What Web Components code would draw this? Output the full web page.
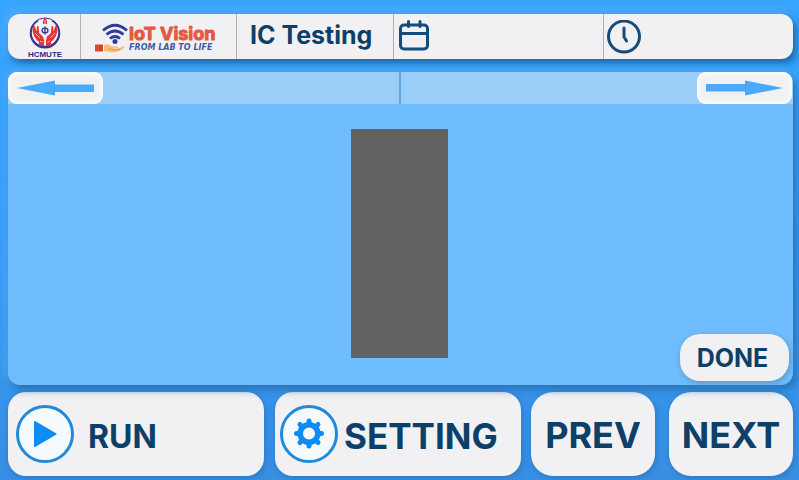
<!DOCTYPE html>
<html lang="en">
<head>
<meta charset="utf-8">
<meta name="viewport" content="width=device-width, initial-scale=1">
<title>IC Testing</title>
<style>
  body { margin: 0; font-family: Inter, "Liberation Sans", sans-serif; color: #0d4069; background: #36a1fe; }
</style>
</head>
<body>
<ic-app></ic-app>
<script>
const define = (name, html, setup) => {
  const template = document.createElement('template');
  template.innerHTML = html;
  customElements.define(name, class extends HTMLElement {
    constructor() {
      super();
      this.attachShadow({ mode: 'open' }).append(template.content.cloneNode(true));
    }
    connectedCallback() {
      if (setup) setup(this);
    }
  });
};

define('hcmute-logo', `
<style>
  :host { display: flex; flex-direction: column; align-items: center; color: #2b2c83; }
  svg { width: 34px; height: 34px; display: block; }
  span { font: bold 8px/9px "Liberation Sans", sans-serif; }
</style>
<svg viewBox="0 0 34 34" aria-hidden="true">
  <path d="M10 4.500A14.500 14.500 0 1 0 24 4.500A14 14 0 1 1 10 4.500Z" fill="#34358c" stroke="#34358c" stroke-width="1.500"/>
  <circle cx="17" cy="16.500" r="14.500" fill="none" stroke="#34358c" stroke-width="1"/>
  <path d="M17 1.500c-2 3-2.500 4-1.800 6.500h3.600c.7-2.500.2-3.500-1.800-6.500Z" fill="#e32b2d"/>
  <path d="M17 4v4" stroke="#fff" stroke-width=".8"/>
  <path d="M5 10l1.500-.5 2 6 .5-5.500 1.500.3.700 7 3.800 3.200 1 3.500V30H11v-4C7 23 5 19 4.500 14Z M29 10l-1.500-.5-2 6-.5-5.500-1.500.3-.7 7-3.800 3.200-1 3.500V30h5v-4c4-3 6-7 6.500-12Z" fill="#e3343a"/>
  <path d="M7 17l5 5M27 17l-5 5M12 25l2.500 1M22 25l-2.500 1" stroke="#fbd5d5" stroke-width=".8"/>
  <circle cx="17" cy="14.500" r="4.500" fill="#e5e8f7"/>
  <ellipse cx="17" cy="14.500" rx="3" ry="2.300" fill="none" stroke="#34358c" stroke-width="1.200"/>
  <path d="M17 10.500v8" stroke="#34358c" stroke-width="1.300"/>
</svg>
<span><slot></slot></span>`);

define('iot-logo', `
<style>
  :host { display: flex; align-items: center; }
  svg { width: 34px; height: 34px; flex: none; }
  .words { display: flex; flex-direction: column; padding-top: 2px; }
  .name { font: 700 18px/20px Inter, sans-serif; color: #e15a40; -webkit-text-stroke: 1px #e15a40; white-space: nowrap; }
  .tag { font: italic bold 8px/8px "DejaVu Sans", sans-serif; color: #4a57a3; white-space: nowrap; }
</style>
<svg viewBox="0 0 34 34" aria-hidden="true">
  <g fill="none" stroke="#2e3c98" stroke-width="2.800">
    <path d="M8 10.500Q20 0 32 10.500"/><path d="M11.500 14.500Q20 7.500 28.500 14.500"/><path d="M15 18.500Q20 14.500 25 18.500"/>
  </g>
  <circle cx="20" cy="21.500" r="2.500" fill="#2e3c98"/>
  <path d="M9 25c4-1 6 0 8 1.500h5c2 .2 1.500 2-.5 2h-4c4 1 7 0 10-2 2-.8 3 .5 1 2-5 3.500-10 4.500-14 3.500L9 31Z" fill="#f6bd78"/>
  <path d="M13 28.500c5 2 9 1.500 12 .5" fill="none" stroke="#df9651"/>
  <path d="M0 24.500h8v7H0Z" fill="#e0492f"/><path d="M5.500 25v6" stroke="#963d3d" stroke-width=".7"/>
</svg>
<span class="words"><span class="name"><slot></slot></span><span class="tag"><slot name="tag"></slot></span></span>`);

define('status-bar', `
<style>
  :host { display: block; }
  header { display: grid; grid-template-columns: 73fr 156fr 157fr 210fr 189fr; min-height: 45px; border-radius: 12px;
    background: #f1f1f3; box-shadow: 3px 4px 9px #17609f, -2px -2px 8px #5fb4ff; }
  header > div { display: flex; align-items: center; min-width: 0; border-right: 1px solid #aeb0b3; }
  header > div:last-child { border: 0; }
  .crest { justify-content: center; padding: 2px 0 0 2px; }
  .brand { padding-left: 14px; }
  .title { padding: 0 0 3px 13px; }
  h1 { font: 700 25px/30px Inter, sans-serif; margin: 0; white-space: nowrap; }
  .icon { padding-left: 3px; }
  svg { width: 34px; height: 34px; fill: none; stroke: #174b78; stroke-width: 3; stroke-linecap: round; stroke-linejoin: round; }
</style>
<header>
  <div class="crest"><hcmute-logo>HCMUTE</hcmute-logo></div>
  <div class="brand"><iot-logo>IoT Vision<span slot="tag">FROM LAB TO LIFE</span></iot-logo></div>
  <div class="title"><h1>IC Testing</h1></div>
  <div class="icon"><svg viewBox="0 0 34 34" role="img" aria-label="Date"><rect x="3.500" y="5" width="27" height="24" rx="3.500"/><path d="M3.500 13.500h27M11.500 1.500v5M23 1.500v5"/></svg></div>
  <div class="icon"><svg viewBox="0 0 34 34" role="img" aria-label="Time"><circle cx="17" cy="16.500" r="15.500"/><path d="M17 8v8.500q0 1 1 2l1.500 2.500"/></svg></div>
</header>`);

define('arrow-button', `
<style>
  :host { display: flex; width: 95px; }
  button { display: flex; align-items: center; justify-content: center; width: 100%; height: 32px; padding: 0; border: 0;
    border-radius: 9px; background: #f1f1f3; box-shadow: inset 0 0 4px 2px #fbfdff; }
  svg { width: 77px; height: 16px; fill: #49a9fa; }
  :host([next]) svg { transform: rotate(180deg); }
</style>
<button type="button"><svg viewBox="0 0 77 16" aria-hidden="true"><path d="M0 8L38 .5V4.500H77V12H38v3.500Z"/></svg></button>`,
  el => el.shadowRoot.querySelector('button').setAttribute('aria-label', el.hasAttribute('next') ? 'Forward' : 'Back'));

define('pill-button', `
<style>
  :host { display: block; }
  button { font: 700 25px/30px Inter, sans-serif; color: inherit; width: 109px; height: 47px; padding: 0 4px 0 0; border: 0;
    border-radius: 20px; background: #f1f1f3; box-shadow: 1px 2px 6px #5d94c8; }
</style>
<button type="button"><slot></slot></button>`);

define('test-panel', `
<style>
  :host { display: flex; flex-direction: column; position: relative; min-height: 313px; border-radius: 12px; background: #6fbdfe;
    box-shadow: 3px 4px 8px #276dac, -2px -2px 8px #59b0fd; }
  nav { display: grid; grid-template-columns: 1fr 2px 1fr; padding-right: 1px; background: #9bcff8; border-radius: 10px 10px 0 0; }
  nav i { background: #5caae8; }
  arrow-button[next] { justify-self: end; }
  .stage { flex: 1; display: flex; justify-content: center; padding: 25px 2px 27px 0; }
  .chip { width: 97px; background: #626262; }
  pill-button { position: absolute; right: 4px; bottom: 4px; }
</style>
<nav><arrow-button></arrow-button><i></i><arrow-button next></arrow-button></nav>
<div class="stage"><div class="chip"></div></div>
<pill-button>DONE</pill-button>`);

define('action-button', `
<style>
  :host { display: grid; --size: 36px; --inset: 8px; --gap: 14px; --drop: 3px; }
  button { display: flex; align-items: center; justify-content: flex-start; gap: var(--gap); min-width: 0; padding: 0 0 0 var(--inset);
    border: 0; border-radius: 18px; background: #f1f1f3; color: inherit; font: 700 var(--size)/40px Inter, sans-serif;
    box-shadow: 1px 2px 7px #2b77bf; }
  :host([plain]) { --drop: 2px; }
  :host([plain]) button { justify-content: center; padding: 0; border-radius: 22px; }
  .label { padding-top: var(--drop); }
</style>
<button type="button"><slot name="icon"></slot><span class="label"><slot></slot></span></button>`);

define('action-bar', `
<style>
  :host { display: grid; grid-template-columns: 513fr 262fr; gap: 10px; min-height: 84px; }
  .main { display: grid; grid-template-columns: 256fr 246fr; gap: 11px; }
  .steps { display: grid; grid-template-columns: 1fr 1fr; gap: 14px; }
  .run { --size: 32px; --drop: 6px; }
  .setting { --size: 35px; --inset: 5px; --gap: 6px; }
  svg { width: 58px; height: 58px; flex: none; }
  .ring { fill: #f5faff; stroke: #218ada; stroke-width: 3; }
</style>
<div class="main">
  <action-button class="run"><svg slot="icon" viewBox="0 0 58 58" aria-hidden="true"><circle class="ring" cx="29" cy="29" r="27.500"/><path d="M19 17L39.500 29 19 41Z" fill="#0d8cf5" stroke="#0d8cf5" stroke-width="2" stroke-linejoin="round"/></svg>RUN</action-button>
  <action-button class="setting"><svg slot="icon" viewBox="0 0 58 58" aria-hidden="true"><circle class="ring" cx="29" cy="29" r="27.500"/><g transform="translate(29 28.500)"><circle r="8.800" fill="none" stroke="#0d8cf5" stroke-width="5.600"/><g stroke="#0d8cf5" stroke-width="5" stroke-linecap="round"><path d="M0-12.500V-11M0 12.500V11M-12.500 0H-11M12.500 0H11M-9-9L-8-8M9 9L8 8M-9 9L-8 8M9-9L8-8"/></g></g></svg>SETTING</action-button>
</div>
<div class="steps"><action-button plain>PREV</action-button><action-button plain>NEXT</action-button></div>`);

define('ic-app', `
<style>
  :host { display: block; box-sizing: border-box; min-height: 100vh; padding: 14px 6px 4px 8px;
    background: linear-gradient(#36a5ff, #349cfa 50%, #398fe3); }
  test-panel { margin: 13px 0 7px; }
  main { display: block; }
</style>
<status-bar></status-bar>
<main><test-panel></test-panel><action-bar></action-bar></main>`);
</script>
</body>
</html>
